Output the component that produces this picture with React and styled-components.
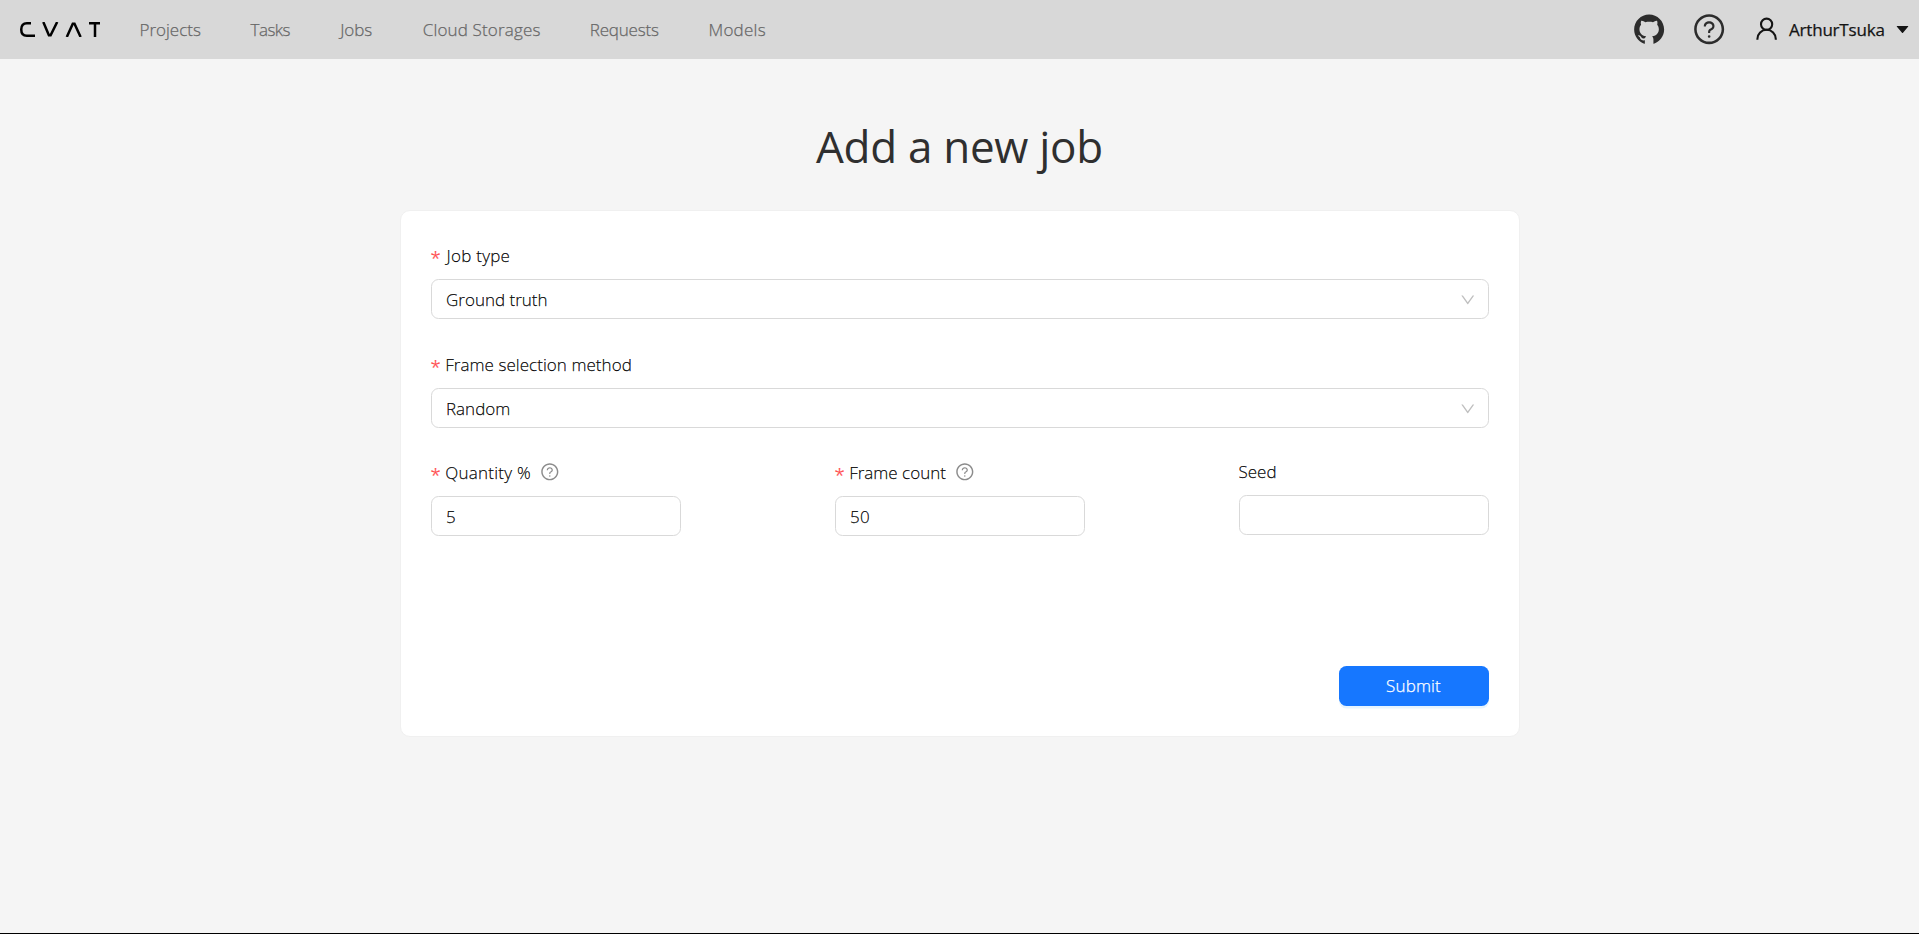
import React from "react";
import styled, { createGlobalStyle } from "styled-components";
import {
  AiFillCaretDown,
  AiFillGithub,
  AiOutlineDown,
  AiOutlineQuestionCircle,
} from "react-icons/ai";

const GlobalStyle = createGlobalStyle`
  *, *::before, *::after { box-sizing: border-box; }
  body {
    margin: 0;
    background: #f5f5f5;
    color: rgba(0, 0, 0, 0.95);
    font: 300 17px/27.5px "Open Sans", "Noto Sans", sans-serif;
    -webkit-text-stroke: 0.25px currentColor;
  }
  svg { display: block; flex: none; }
`;

const Page = styled.div`
  display: flex;
  flex-direction: column;
  height: 100vh;
  border-bottom: 1px solid #000;
`;

const Header = styled.header`
  display: flex;
  align-items: center;
  flex: none;
  height: 59px;
  padding: 0 8px 0 20px;
  background: #d8d8d8;
`;

const Logo = styled.svg`
  width: 80px;
  height: 15px;
  margin-right: 39.5px;
  fill: none;
  stroke: #000;
  stroke-width: 2.5;
`;

const Nav = styled.nav`
  display: flex;
  flex: 1;
`;

const NavLink = styled.a`
  width: ${(p) => p.$width}px;
  letter-spacing: ${(p) => p.$track || 0}px;
  color: #676767;
  white-space: nowrap;
`;

const Tools = styled.div`
  display: flex;
  align-items: center;
  color: #2c2c2c;
`;

const ToolButton = styled.span`
  display: flex;
  justify-content: center;
  width: 60px;
  font-size: 34.3px;
`;

const Account = styled.div`
  display: flex;
  align-items: center;
  margin-left: 17px;
  color: #141414;
`;

const UserIcon = styled.svg`
  width: 22px;
  height: 24px;
  margin-right: 11px;
  fill: none;
  stroke: currentColor;
  stroke-width: 2.1;
`;

const UserName = styled.span`
  width: 105px;
  font-weight: 400;
  letter-spacing: -0.2px;
  white-space: nowrap;
`;

const Main = styled.main`
  display: flex;
  flex-direction: column;
  align-items: center;
`;

const Title = styled.h1`
  margin: 57px 0 34px;
  font-size: 44px;
  font-weight: 400;
  line-height: 60px;
  letter-spacing: -0.3px;
  color: #2f2f2f;
  -webkit-text-stroke: 0;
`;

const Card = styled.form`
  display: flex;
  flex-direction: column;
  width: 1120px;
  height: 527px;
  padding: 30px;
  background: #fff;
  border: 1px solid #f0f0f0;
  border-radius: 10px;
`;

const Field = styled.div`
  display: flex;
  flex-direction: column;
  width: ${(p) => (p.$short ? "250px" : "100%")};
`;

const Label = styled.label`
  display: flex;
  align-items: center;
  height: 28px;
  padding-top: ${(p) => (p.$required ? 2 : 0)}px;
  margin-bottom: ${(p) => (p.$required ? 10 : 9)}px;
  letter-spacing: ${(p) => p.$track || 0}px;
`;

const Required = styled.span`
  width: ${(p) => p.$width || 14.7}px;
  padding-top: 3px;
  font: 300 18.5px/20px "Noto Sans", sans-serif;
  color: #ff4d4f;
`;

const Hint = styled(AiOutlineQuestionCircle)`
  margin: -3px 0 0 9px;
  font-size: 19.6px;
  color: #8c8c8c;
`;

const Control = styled.div`
  display: flex;
  align-items: center;
  justify-content: space-between;
  height: 40px;
  padding: 1px 11.5px 0 14.5px;
  border: 1px solid #d9d9d9;
  border-radius: 7.5px;
  letter-spacing: ${(p) => p.$track || 0}px;
`;

const Arrow = styled(AiOutlineDown)`
  font-size: 17.5px;
  color: #bfbfbf;
`;

const Stack = styled.div`
  display: flex;
  flex-direction: column;
  gap: 31px;
`;

const Row = styled.div`
  display: flex;
  justify-content: space-between;
  align-items: flex-start;
  margin-top: 30px;
`;

const Submit = styled.button`
  width: 150px;
  height: 40px;
  margin: auto 0 0 auto;
  padding: 0;
  border: 0;
  border-radius: 7.5px;
  background: #1677ff;
  box-shadow: 0 2.5px 0 rgba(5, 145, 255, 0.1);
  color: #fff;
  font: inherit;
  letter-spacing: 0.15px;
  -webkit-text-stroke: 0.25px #fff;
`;

const LINKS = [
  { text: "Projects", width: 111 },
  { text: "Tasks", width: 89.7, track: -0.5 },
  { text: "Jobs", width: 82.6, track: -0.1 },
  { text: "Cloud Storages", width: 167, track: 0.15 },
  { text: "Requests", width: 118.7, track: -0.2 },
  { text: "Models", width: 60, track: 0.25 },
];

function Select({ label, value, track, indent }) {
  return (
    <Field>
      <Label $required $track={track}>
        <Required $width={indent}>*</Required>
        {label}
      </Label>
      <Control>
        {value}
        <Arrow />
      </Control>
    </Field>
  );
}

function NumberField({ label, value, required, track }) {
  return (
    <Field $short>
      <Label $required={required} $track={track}>
        {required && <Required>*</Required>}
        {label}
        {required && <Hint />}
      </Label>
      <Control $track={0.4}>{value}</Control>
    </Field>
  );
}

export default function App() {
  return (
    <Page>
      <GlobalStyle />
      <Header>
        <Logo viewBox="0 0 80 15">
          <path d="M11 1.25H6.8C3.2 1.25 1.25 3.6 1.25 7.5s1.95 6.25 5.55 6.25H15" />
          <path d="M23.3 0l5.6 13.2h1.7L37.2 0M46.8 15l6-13.2h1.7L60.6 15" />
          <path d="M69 1.25h11M75 1v14" />
        </Logo>
        <Nav>
          {LINKS.map((l) => (
            <NavLink key={l.text} $width={l.width} $track={l.track}>
              {l.text}
            </NavLink>
          ))}
        </Nav>
        <Tools>
          <ToolButton><AiFillGithub /></ToolButton>
          <ToolButton><AiOutlineQuestionCircle /></ToolButton>
          <Account>
            <UserIcon viewBox="0 0 22 24">
              <circle cx="10.6" cy="7.2" r="5.6" />
              <path d="M1.4 22.8V22a9.2 9.2 0 0 1 18.4 0v.8" />
            </UserIcon>
            <UserName>ArthurTsuka</UserName>
            <AiFillCaretDown size={17} />
          </Account>
        </Tools>
      </Header>
      <Main>
        <Title>Add a new job</Title>
        <Card>
          <Stack>
            <Select label="Job type" value="Ground truth" track={0.25} indent={16} />
            <Select label="Frame selection method" value="Random" track={0.05} />
          </Stack>
          <Row>
            <NumberField label="Quantity %" value="5" required track={0.25} />
            <NumberField label="Frame count" value="50" required />
            <NumberField label="Seed" value="" />
          </Row>
          <Submit type="button">Submit</Submit>
        </Card>
      </Main>
    </Page>
  );
}
